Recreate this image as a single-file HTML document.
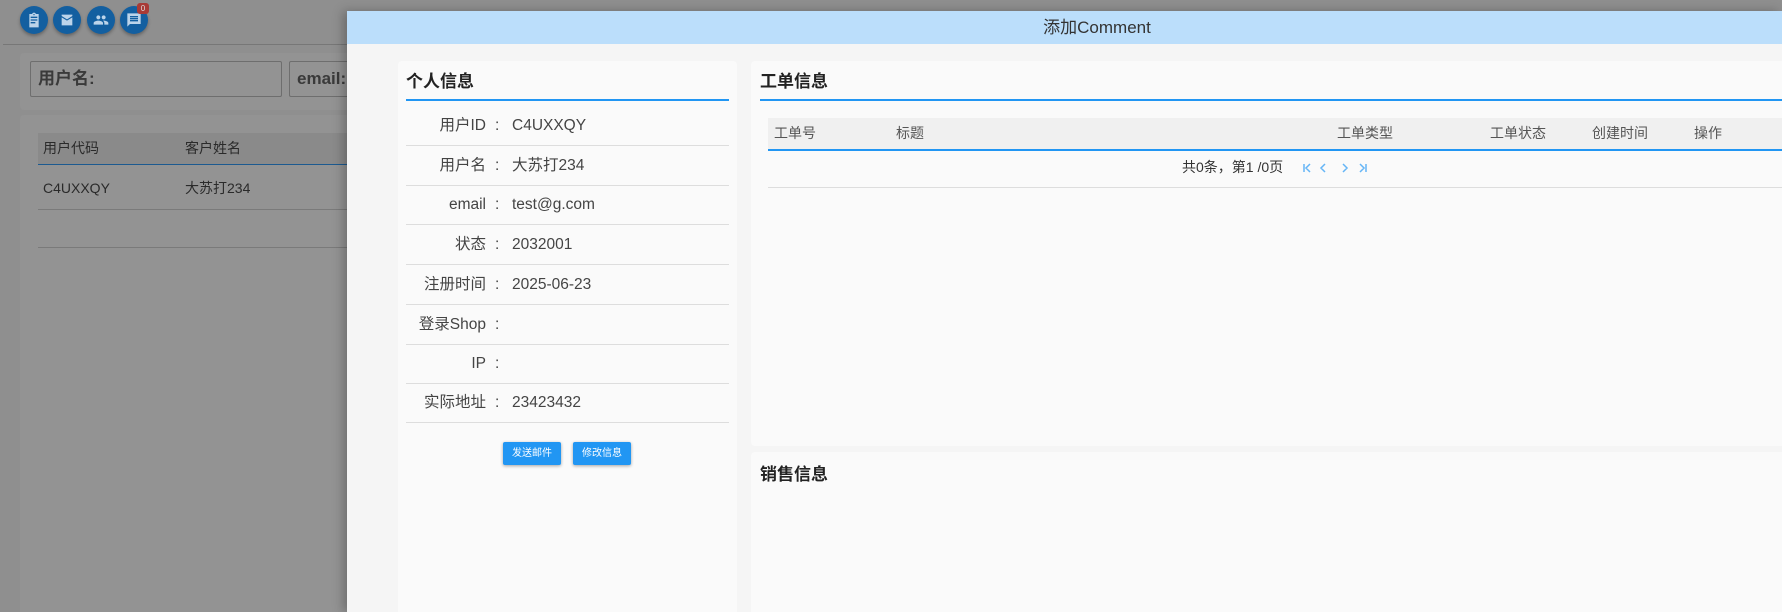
<!DOCTYPE html>
<html><head><meta charset="utf-8"><style>
*{box-sizing:border-box;margin:0;padding:0}
html,body{width:1782px;height:612px;overflow:hidden}
body{background:#8f8f8f;font-family:"Liberation Sans","Noto Sans CJK SC",sans-serif;position:relative;color:#333}
.abs{position:absolute;line-height:1.2}
.ic{position:absolute;top:6px;width:28px;height:28px;border-radius:50%;background:#135fa0;box-shadow:0 2px 3px rgba(0,0,0,.3)}
.ic svg{position:absolute;left:6px;top:6px}
.bg{color:#2a2a2a}
.modal{position:absolute;left:347px;top:11px;width:1435px;height:601px;background:#f5f5f5;box-shadow:-4px 0 10px rgba(0,0,0,.25);overflow:hidden}
.hdr{width:1500px;height:33px;background:#bbdefb;text-align:center;font-size:17px;line-height:33px;color:#333}
.card{position:absolute;background:#fafafa;border-radius:4px;overflow:hidden}
.ttl{position:absolute;font-size:17px;font-weight:bold;color:#222;line-height:22px}
.bl{position:absolute;height:2px;background:#2196f3}
.row{position:absolute;left:8px;width:323px;height:40px;border-bottom:1px solid #ddd;font-size:15.5px;color:#444;line-height:39px}
.row .l{position:absolute;right:243px;top:0;text-align:right;white-space:nowrap}
.row .c{position:absolute;left:89px;top:0}
.row .v{position:absolute;left:106px;top:0}
.btn{position:absolute;width:58px;height:23px;background:#2196f3;color:#fff;font-size:10px;text-align:center;line-height:23px;border-radius:2px;box-shadow:0 1px 3px rgba(0,0,0,.35)}
.th{position:absolute;top:0;font-size:14px;color:#555;line-height:31px}
</style></head><body>
<div class="ic" style="left:20px"><svg width="16" height="16" viewBox="0 0 24 24"><path fill="#bcd4ea" d="M19 3h-4.2C14.4 1.8 13.3 1 12 1s-2.4.8-2.8 2H5v20h14V3zm-7 0c.6 0 1 .4 1 1s-.4 1-1 1-1-.4-1-1 .4-1 1-1zm2 14H7v-2h7v2zm3-4H7v-2h10v2zm0-4H7V7h10v2z"/></svg></div>
<div class="ic" style="left:53px"><svg width="16" height="16" viewBox="0 0 24 24"><path fill="#bcd4ea" d="M20 4H4v16h16V4zm0 4l-8 5-8-5V6l8 5 8-5v2z"/></svg></div>
<div class="ic" style="left:87px"><svg width="16" height="16" viewBox="0 0 24 24"><path fill="#bcd4ea" d="M16 11c1.7 0 3-1.3 3-3s-1.3-3-3-3-3 1.3-3 3 1.3 3 3 3zm-8 0c1.700 0 3-1.3 3-3S9.7 5 8 5 5 6.3 5 8s1.3 3 3 3zm0 2c-2.3 0-7 1.2-7 3.5V19h14v-2.5C15 14.2 10.3 13 8 13zm8 0c-.3 0-.6 0-1 .1 1.2.8 2 2 2 3.4V19h6v-2.5c0-2.3-4.7-3.5-7-3.5z"/></svg></div>
<div class="ic" style="left:120px"><svg width="16" height="16" viewBox="0 0 24 24"><path fill="#bcd4ea" d="M22 2H2v20l4-4h16V2zM18 14H6v-2h12v2zm0-3H6V9h12v2zm0-3H6V6h12v2z"/></svg></div>
<div class="abs" style="left:137px;top:3px;width:12px;height:11px;background:#a83a36;border-radius:3px;color:#ddd;font-size:8px;text-align:center;line-height:11px">0</div>
<div class="abs" style="left:3px;top:44px;width:400px;height:1px;background:#777"></div>
<div class="abs" style="left:20px;top:53px;width:380px;height:57px;background:#939393;border-radius:4px"></div>
<div class="abs bg" style="left:30px;top:61px;width:252px;height:36px;border:1px solid #6e6e6e;border-radius:2px;font-size:17px;font-weight:bold;padding:0 7px;line-height:34px;color:#3a3a3a">用户名:</div>
<div class="abs bg" style="left:289px;top:61px;width:120px;height:36px;border:1px solid #6e6e6e;border-radius:2px;font-size:17px;font-weight:bold;padding:0 7px;line-height:34px;color:#3a3a3a">email:</div>
<div class="abs" style="left:20px;top:115px;width:380px;height:497px;background:#939393;border-radius:4px 4px 0 0"></div>
<div class="abs" style="left:38px;top:133px;width:360px;height:32px;background:#8a8a8a;border-bottom:1px solid #1c5a90"></div>
<div class="abs bg" style="left:43px;top:133px;font-size:14px;line-height:31px">用户代码</div>
<div class="abs bg" style="left:185px;top:133px;font-size:14px;line-height:31px">客户姓名</div>
<div class="abs bg" style="left:43px;top:172px;font-size:14px;line-height:32px">C4UXXQY</div>
<div class="abs bg" style="left:185px;top:172px;font-size:14px;line-height:32px">大苏打234</div>
<div class="abs" style="left:38px;top:209px;width:360px;height:1px;background:#7a7a7a"></div>
<div class="abs" style="left:38px;top:247px;width:360px;height:1px;background:#7a7a7a"></div>

<div class="modal">
<div class="hdr">添加Comment</div>
<div class="card" style="left:51px;top:50px;width:339px;height:551px;border-radius:4px 4px 0 0">
<div class="ttl" style="left:8px;top:10px">个人信息</div>
<div class="bl" style="left:8px;top:38px;width:323px"></div>
<div class="row" style="top:45px"><span class="l">用户ID</span><span class="c">:</span><span class="v">C4UXXQY</span></div>
<div class="row" style="top:85px"><span class="l">用户名</span><span class="c">:</span><span class="v">大苏打234</span></div>
<div class="row" style="top:124px"><span class="l">email</span><span class="c">:</span><span class="v">test@g.com</span></div>
<div class="row" style="top:164px"><span class="l">状态</span><span class="c">:</span><span class="v">2032001</span></div>
<div class="row" style="top:204px"><span class="l">注册时间</span><span class="c">:</span><span class="v">2025-06-23</span></div>
<div class="row" style="top:244px"><span class="l">登录Shop</span><span class="c">:</span></div>
<div class="row" style="top:283px"><span class="l">IP</span><span class="c">:</span></div>
<div class="row" style="top:322px"><span class="l">实际地址</span><span class="c">:</span><span class="v">23423432</span></div>
</div>
<div class="btn" style="left:156px;top:431px">发送邮件</div>
<div class="btn" style="left:226px;top:431px">修改信息</div>

<div class="card" style="left:404px;top:50px;width:1031px;height:385px;border-radius:4px 0 0 4px">
<div class="ttl" style="left:9px;top:10px">工单信息</div>
<div class="bl" style="left:9px;top:38px;width:1100px"></div>
<div class="abs" style="left:17px;top:57px;width:1100px;height:33px;background:#f0f0f0;border-bottom:2px solid #2196f3">
<span class="th" style="left:6px">工单号</span>
<span class="th" style="left:128px">标题</span>
<span class="th" style="left:569px">工单类型</span>
<span class="th" style="left:722px">工单状态</span>
<span class="th" style="left:824px">创建时间</span>
<span class="th" style="left:926px">操作</span>
</div>
<div class="abs" style="left:431px;top:97px;font-size:14px;color:#333;line-height:18px">共0条，第1 /0页</div>
<svg class="abs" style="left:551px;top:100px" width="72" height="14" viewBox="0 0 72 14" fill="none" stroke="#64b5f6" stroke-width="1.5"><path d="M2 3v8M8 3l-4 4 4 4M23 3l-4 4 4 4M41 3l4 4-4 4M58 3l4 4-4 4M64 3v8"/></svg>
<div class="abs" style="left:17px;top:126px;width:1100px;height:1px;background:#ddd"></div>
</div>
<div class="card" style="left:404px;top:441px;width:1031px;height:160px;border-radius:4px 0 0 0">
<div class="ttl" style="left:9px;top:12px">销售信息</div>
</div>
</div>
</body></html>
